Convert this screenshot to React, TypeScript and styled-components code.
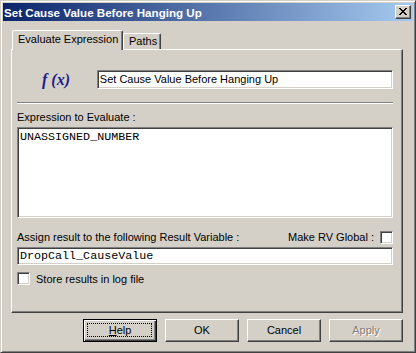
import React from "react"
import styled, {createGlobalStyle} from "styled-components";

const GlobalStyle = createGlobalStyle`
    html, body {
        margin: 0;
        padding: 0;
        overflow: hidden;
        background: #d4d0c8;
    }
    #root {
        width: 416px;
        height: 353px;
    }
`

const UI_FONT = `"Liberation Sans", Arial, sans-serif`
const MONO_FONT = `"Liberation Mono", "Courier New", monospace`

const Window = styled.div`
    width: 416px;
    height: 353px;
    box-sizing: border-box;
    background: #d4d0c8;
    border: 1px solid;
    border-color: #d4d0c8 #404040 #404040 #d4d0c8;
    box-shadow: inset 1px 1px #fff, inset -1px -1px #808080;
    padding: 2px;
    font-family: ${UI_FONT};
    font-size: 11px;
    color: #000;
    display: flex;
    flex-direction: column;
`
const TitleBar = styled.div`
    height: 18px;
    background: linear-gradient(to right, #0a246a, #a6caf0);
    display: flex;
    align-items: center;
    justify-content: space-between;
    padding: 0 2px 0 1px;
`
const TitleText = styled.span`
    color: #fff;
    font-weight: bold;
    font-size: 11.6px;
    white-space: nowrap;
`
const CloseButton = styled.div`
    width: 16px;
    height: 14px;
    box-sizing: border-box;
    background: #d4d0c8;
    border: 1px solid;
    border-color: #fff #404040 #404040 #fff;
    box-shadow: inset -1px -1px #808080;
    display: flex;
    align-items: center;
    justify-content: center;
    padding: 0 1px 1px 0;
`
const Body = styled.div`
    padding: 9px 10px 0 8px;
    display: flex;
    flex-direction: column;
`
const TabStrip = styled.div`
    height: 19px;
    display: flex;
    align-items: flex-end;
    padding-left: 1px;
`
const Tab = styled.div<{ $active?: boolean; $w: number }>`
    position: relative;
    z-index: ${p => p.$active ? 1 : 0};
    box-sizing: border-box;
    width: ${p => p.$w}px;
    height: ${p => p.$active ? 20 : 16}px;
    margin-bottom: ${p => p.$active ? -1 : 0}px;
    background: #d4d0c8;
    border: 1px solid;
    border-bottom: none;
    border-color: #fff #404040 #404040 #fff;
    border-radius: 2px 2px 0 0;
    box-shadow: inset -1px 0 #808080;
    padding: ${p => p.$active ? "2px 0 0 5px" : "1px 0 0 5px"};
    line-height: 13px;
    white-space: nowrap;
`
const Panel = styled.div`
    height: 264px;
    box-sizing: border-box;
    border: 1px solid;
    border-color: #fff #404040 #404040 #fff;
    box-shadow: inset -1px -1px #808080;
    padding: 20px 9px 0 5px;
    display: flex;
    flex-direction: column;
`
const FxRow = styled.div`
    display: flex;
    align-items: center;
    height: 19px;
`
const FxLabel = styled.span`
    width: 80px;
    box-sizing: border-box;
    padding-left: 25px;
    font-family: "Liberation Serif", "Times New Roman", serif;
    font-weight: bold;
    font-style: italic;
    font-size: 16px;
    color: #1c1c8c;
    white-space: nowrap;
`
const Sunken = styled.div<{ $h: number; $mono?: boolean }>`
    box-sizing: border-box;
    height: ${p => p.$h}px;
    background: #fff;
    border: 1px solid;
    border-color: #808080 #fff #fff #808080;
    box-shadow: inset 1px 1px #404040, inset -1px -1px #d4d0c8;
    padding: 1px 3px 0 2px;
    font-family: ${p => p.$mono ? MONO_FONT : UI_FONT};
    font-size: ${p => p.$mono ? "11.7px" : "11px"};
    line-height: ${p => p.$mono ? "14px" : "15px"};
    white-space: nowrap;
    overflow: hidden;
`
const NameField = styled(Sunken)`
    width: 297px;
`
const Separator = styled.div`
    margin-top: 13px;
    border-top: 1px solid #808080;
    border-bottom: 1px solid #fff;
`
const Label = styled.div<{ $mt: number }>`
    margin-top: ${p => p.$mt}px;
    line-height: 13px;
    white-space: nowrap;
`
const ExprBox = styled(Sunken)`
    margin-top: 3px;
    padding-top: 2px;
`
const AssignRow = styled.div`
    margin-top: 13px;
    height: 13px;
    display: flex;
    align-items: center;
    justify-content: space-between;
    line-height: 13px;
`
const Inline = styled.span`
    display: flex;
    align-items: center;
    gap: 6px;
`
const Check = styled.span`
    display: inline-block;
    width: 13px;
    height: 13px;
    box-sizing: border-box;
    background: #fff;
    border: 1px solid;
    border-color: #808080 #fff #fff #808080;
    box-shadow: inset 1px 1px #404040, inset -1px -1px #d4d0c8;
`
const ResultField = styled(Sunken)`
    margin-top: 3px;
    padding-top: 1px;
`
const StoreRow = styled(Inline)`
    margin-top: 7px;
    height: 13px;
`
const ButtonRow = styled.div`
    margin-top: 6px;
    display: flex;
    justify-content: flex-end;
    gap: 8px;
`
const Button = styled.div<{ $disabled?: boolean }>`
    position: relative;
    width: 74px;
    height: 23px;
    box-sizing: border-box;
    border: 1px solid;
    border-color: #fff #404040 #404040 #fff;
    box-shadow: inset -1px -1px #808080;
    display: flex;
    align-items: center;
    justify-content: center;
    padding-bottom: 1px;
    color: ${p => p.$disabled ? "#808080" : "#000"};
    text-shadow: ${p => p.$disabled ? "1px 1px #fff" : "none"};
`
const DefaultButton = styled(Button)`
    border-color: #000;
    box-shadow: inset 1px 1px #fff, inset -1px -1px #404040, inset -2px -2px #808080;

    &::after {
        content: "";
        position: absolute;
        inset: 3px 4px 4px 3px;
        border: 1px dotted #000;
    }
`

const closeGlyph = [
    "XX....XX",
    ".XX..XX.",
    "..XXXX..",
    "...XX...",
    "..XXXX..",
    ".XX..XX.",
    "XX....XX",
]

const CloseIcon: React.FC = () => (
    <svg width={8} height={7} viewBox="0 0 8 7" shapeRendering="crispEdges">
        {closeGlyph.map((row, y) =>
            row.split("").map((c, x) => c === "X"
                ? <rect key={`${x}-${y}`} x={x} y={y} width={1} height={1} fill="#000"/>
                : null)
        )}
    </svg>
)

const App: React.FC = () => {
    return (
        <>
            <GlobalStyle/>
            <Window>
                <TitleBar>
                    <TitleText>Set Cause Value Before Hanging Up</TitleText>
                    <CloseButton><CloseIcon/></CloseButton>
                </TitleBar>
                <Body>
                    <TabStrip>
                        <Tab $active $w={111}>Evaluate Expression</Tab>
                        <Tab $w={38}>Paths</Tab>
                    </TabStrip>
                    <Panel>
                        <FxRow>
                            <FxLabel>f (x)</FxLabel>
                            <NameField $h={19}>Set Cause Value Before Hanging Up</NameField>
                        </FxRow>
                        <Separator/>
                        <Label $mt={7}>Expression to Evaluate :</Label>
                        <ExprBox $h={91} $mono>UNASSIGNED_NUMBER</ExprBox>
                        <AssignRow>
                            <span>Assign result to the following Result Variable :</span>
                            <Inline>Make RV Global : <Check/></Inline>
                        </AssignRow>
                        <ResultField $h={18} $mono>DropCall_CauseValue</ResultField>
                        <StoreRow>
                            <Check/>
                            <span>Store results in log file</span>
                        </StoreRow>
                    </Panel>
                    <ButtonRow>
                        <DefaultButton><span><u>H</u>elp</span></DefaultButton>
                        <Button>OK</Button>
                        <Button>Cancel</Button>
                        <Button $disabled>Apply</Button>
                    </ButtonRow>
                </Body>
            </Window>
        </>
    )
}
export default App;
